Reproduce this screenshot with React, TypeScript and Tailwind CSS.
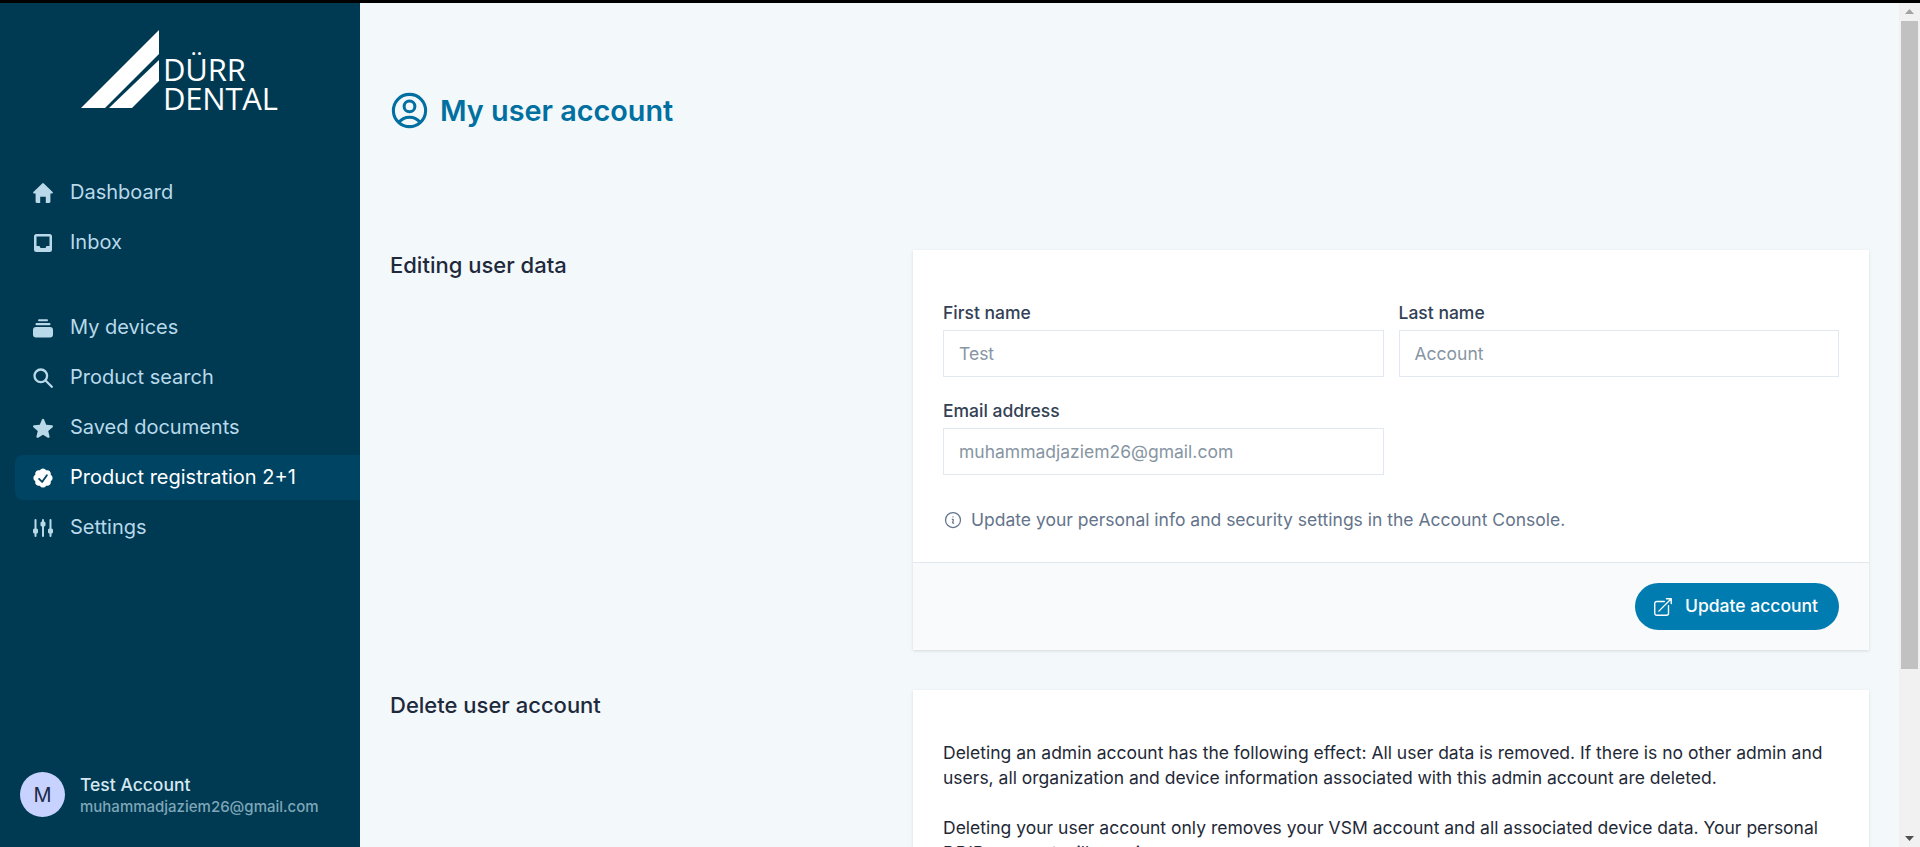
import React from "react";
import {
  HiMiniStar,
  HiMiniCheckBadge,
  HiOutlineUserCircle,
  HiOutlineInformationCircle,
  HiOutlineArrowTopRightOnSquare,
} from "react-icons/hi2";

const font = { fontFamily: "Inter, 'Liberation Sans', sans-serif" };

function HomeIcon() {
  return (
    <svg width="20" height="20" viewBox="0 0 20 20" fill="currentColor">
      <path d="M9.2.5a1.1 1.1 0 0 1 1.6 0l8.8 8.6c.5.5.2 1.3-.5 1.3h-1.7v8.3c0 .7-.5 1.2-1.2 1.2h-3.4v-6.2H7.2v6.2H3.8c-.7 0-1.2-.5-1.2-1.2v-8.3H.9c-.7 0-1-.8-.5-1.3z" />
    </svg>
  );
}

function InboxIcon() {
  return (
    <svg width="20" height="20" viewBox="0 0 20 20" fill="currentColor">
      <path
        fillRule="evenodd"
        d="M3.5 1h13A2.5 2.5 0 0 1 19 3.5v13a2.5 2.5 0 0 1-2.500 2.500h-13A2.500 2.500 0 0 1 1 16.500v-13A2.500 2.500 0 0 1 3.500 1zM3.500 3.500v9.500h3l1 2h5l1-2h3V3.500z"
      />
    </svg>
  );
}

function DevicesIcon() {
  return (
    <svg width="20" height="20" viewBox="0 0 20 20" fill="currentColor">
      <rect x="5" y="1.200" width="10" height="2" rx="1" />
      <rect x="2.500" y="5" width="15" height="2.300" rx="1.100" />
      <rect x="0" y="9" width="20" height="10.500" rx="3" />
    </svg>
  );
}

function SearchIcon() {
  return (
    <svg width="20" height="20" viewBox="0 0 20 20" fill="none" stroke="currentColor" strokeWidth="2.300" strokeLinecap="round">
      <circle cx="7.800" cy="7.800" r="6.300" />
      <path d="M12.500 12.500L18.800 18.800" />
    </svg>
  );
}

function SlidersIcon() {
  return (
    <svg width="20" height="20" viewBox="0 0 20 20" fill="currentColor">
      <rect x="1.500" y="1" width="2" height="18" rx="1" />
      <rect x="9" y="1" width="2" height="18" rx="1" />
      <rect x="16.500" y="1" width="2" height="18" rx="1" />
      <rect x="0" y="10.500" width="5" height="5" rx="1.500" />
      <rect x="7.500" y="3.500" width="5" height="5" rx="1.500" />
      <rect x="15" y="10.500" width="5" height="5" rx="1.500" />
    </svg>
  );
}

function NavItem({ icon, label, active }: { icon: React.ReactNode; label: string; active?: boolean }) {
  return (
    <div
      className={
        active
          ? "flex items-center h-[45px] pl-[16px] gap-[15px] rounded-l-lg bg-[#004463] text-white text-[20px]"
          : "flex items-center h-[45px] pl-[16px] gap-[15px] rounded-l-lg text-[#b9d9ea] text-[20px]"
      }
    >
      <span className="w-[24px] h-[24px] flex items-center justify-center text-[24px] shrink-0">{icon}</span>
      <span className="pb-[1px]">{label}</span>
    </div>
  );
}

function Field({ label, value }: { label: string; value: string }) {
  return (
    <label className="flex flex-col flex-1 min-w-0">
      <span className="text-[17.500px] leading-[26px] font-medium text-[#334155]">{label}</span>
      <span className="mt-[4px] h-[47px] pt-[1px] flex items-center px-[15px] border border-[#e2e8f0] bg-white text-[17.500px] text-[#8795a3]">
        {value}
      </span>
    </label>
  );
}

export default function App() {
  return (
    <div className="h-screen w-full flex flex-col overflow-hidden bg-black" style={font}>
      <div className="h-[3px] bg-black shrink-0" />
      <div className="flex flex-1 min-h-0">
        <aside className="w-[360px] shrink-0 bg-[#003a52] flex flex-col pl-[15px]">
          <div className="h-[150px] shrink-0 relative">
            <svg width="205" height="90" viewBox="0 0 205 90" className="absolute left-[66px] top-[27px]">
              <polygon points="0,78 24,78 78,24 78,0" fill="#fff" />
              <polygon points="28,78 51,78 78,51 78,30" fill="#fff" />
            </svg>
            <div className="absolute left-[148px] top-[52px] text-white text-[31px] leading-[29px] font-normal tracking-[-0.2px]" style={{ fontFamily: "'Open Sans', sans-serif" }}>
              <div>DÜRR</div>
              <div>DENTAL</div>
            </div>
          </div>
          <nav className="flex flex-col gap-[5px] mt-[17px]">
            <NavItem icon={<HomeIcon />} label="Dashboard" />
            <NavItem icon={<InboxIcon />} label="Inbox" />
          </nav>
          <nav className="flex flex-col gap-[5px] mt-[40px]">
            <NavItem icon={<DevicesIcon />} label="My devices" />
            <NavItem icon={<SearchIcon />} label="Product search" />
            <NavItem icon={<HiMiniStar />} label="Saved documents" />
            <NavItem icon={<HiMiniCheckBadge />} label="Product registration 2+1" active />
            <NavItem icon={<SlidersIcon />} label="Settings" />
          </nav>
          <div className="mt-auto mb-[30px] flex items-center gap-[15px] pl-[5px]">
            <div className="w-[45px] h-[45px] rounded-full bg-[#c7d2fe] flex items-center justify-center text-[20px] text-[#1e2a4a]">M</div>
            <div className="flex flex-col">
              <span className="text-[17.500px] leading-[24px] font-medium text-[#d5e8f2]">Test Account</span>
              <span className="text-[15px] leading-[20px] font-medium text-[#7fa6b8]">muhammadjaziem26@gmail.com</span>
            </div>
          </div>
        </aside>

        <main className="flex-1 min-w-0 bg-[#f3f8fb] pl-[30px] pr-[30px] overflow-hidden">
          <div className="h-[214px] pt-[85px] flex items-start text-[#0170a0]">
            <div className="h-[45px] flex items-center gap-[9px] -ml-[2px]">
              <HiOutlineUserCircle className="text-[43px] shrink-0 [stroke-width:1.7]" />
              <h1 className="text-[28.800px] leading-[38px] font-semibold">My user account</h1>
            </div>
          </div>

          <section className="flex pt-[33px]">
            <h2 className="w-[523px] shrink-0 text-[22px] leading-[30px] font-medium text-[#1e293b]">Editing user data</h2>
            <div className="flex-1 min-w-0 bg-white shadow-[0_1px_3px_rgba(0,0,0,0.12)]">
              <div className="pt-[50px] px-[30px] pb-[30px]">
                <div className="flex gap-[15px]">
                  <Field label="First name" value="Test" />
                  <Field label="Last name" value="Account" />
                </div>
                <div className="flex gap-[15px] mt-[21px]">
                  <Field label="Email address" value="muhammadjaziem26@gmail.com" />
                  <div className="flex-1" />
                </div>
                <div className="flex items-center gap-[8px] mt-[33px] text-[17.500px] leading-[24px] text-[#64748b]">
                  <HiOutlineInformationCircle className="text-[20px]" />
                  <span>Update your personal info and security settings in the Account Console.</span>
                </div>
              </div>
              <div className="h-[88px] border-t border-[#e2e8f0] bg-[#f8fafc] flex items-center justify-end px-[30px]">
                <button className="h-[47px] pl-[17px] pr-[21px] rounded-full bg-[#007cb0] text-white text-[17.500px] font-medium flex items-center gap-[11px]">
                  <HiOutlineArrowTopRightOnSquare className="text-[22px]" />
                  Update account
                </button>
              </div>
            </div>
          </section>

          <section className="flex mt-[40px]">
            <h2 className="w-[523px] shrink-0 text-[22px] leading-[30px] font-medium text-[#1e293b]">Delete user account</h2>
            <div className="flex-1 min-w-0 bg-white shadow-[0_1px_3px_rgba(0,0,0,0.12)] pt-[50px] px-[30px] pb-[30px] text-[17.500px] leading-[25px] text-[#1f2937]">
              <p>
                Deleting an admin account has the following effect: All user data is removed. If there is no other admin and users, all organization and device information associated with this admin account are deleted.
              </p>
              <p className="mt-[25px]">
                Deleting your user account only removes your VSM account and all associated device data. Your personal DDID account will remain.
              </p>
            </div>
          </section>
        </main>

        <div className="w-[21px] shrink-0 bg-[#f1f1f1] flex flex-col items-center px-[2px]">
          <svg width="9" height="5" viewBox="0 0 9 5" className="mt-[6px] shrink-0">
            <polygon points="4.5,0 9,5 0,5" fill="#a3a3a3" />
          </svg>
          <div className="w-full h-[648px] bg-[#c1c1c1] mt-[7px] shrink-0" />
          <svg width="9" height="5" viewBox="0 0 9 5" className="mt-auto mb-[6px] shrink-0">
            <polygon points="0,0 9,0 4.5,5" fill="#505050" />
          </svg>
        </div>
      </div>
    </div>
  );
}
